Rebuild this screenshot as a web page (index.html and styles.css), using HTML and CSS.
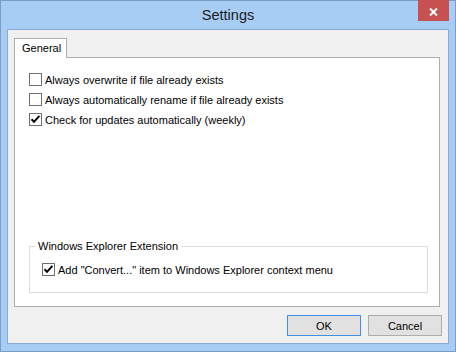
FILE: index.html
```html
<!DOCTYPE html>
<html>
<head>
<meta charset="utf-8">
<link rel="stylesheet" href="styles.css">
</head>
<body>
<div class="window">
  <div class="titlebar">
    <span class="title">Settings</span>
    <div class="close"><svg width="9" height="8" viewBox="0 0 9 8"><path d="M1 0.5 L8 7.5 M8 0.5 L1 7.5" stroke="#fff" stroke-width="2" fill="none"/></svg></div>
  </div>
  <div class="client">
    <div class="tabs"><div class="tab">General</div></div>
    <div class="panel">
      <div class="options">
        <label class="row"><span class="box"></span><span>Always overwrite if file already exists</span></label>
        <label class="row"><span class="box"></span><span>Always automatically rename if file already exists</span></label>
        <label class="row"><span class="box"><svg width="11" height="11" viewBox="0 0 11 11"><path d="M1.5 5.2 L4 7.8 L9.4 1.8" stroke="#000" stroke-width="2" fill="none"/></svg></span><span>Check for updates automatically (weekly)</span></label>
      </div>
      <fieldset class="group">
        <legend>Windows Explorer Extension</legend>
        <label class="row"><span class="box"><svg width="11" height="11" viewBox="0 0 11 11"><path d="M1.5 5.2 L4 7.8 L9.4 1.8" stroke="#000" stroke-width="2" fill="none"/></svg></span><span>Add "Convert..." item to Windows Explorer context menu</span></label>
      </fieldset>
    </div>
    <div class="buttons">
      <button class="btn default">OK</button>
      <button class="btn">Cancel</button>
    </div>
  </div>
</div>
</body>
</html>
```
FILE: styles.css
```css
html, body { margin: 0; padding: 0; }
body {
  width: 456px;
  height: 352px;
  font-family: "Liberation Sans", Arial, sans-serif;
  font-size: 11px;
  color: #000;
}
.window {
  box-sizing: border-box;
  width: 456px;
  height: 352px;
  border: 1px solid #7d9ccc;
  background: #a7cdf4;
  padding: 0 6px 7px;
  display: flex;
  flex-direction: column;
  position: relative;
}
.titlebar {
  height: 28px;
  flex: none;
  display: flex;
  align-items: center;
  justify-content: center;
}
.title {
  font-size: 14.5px;
  color: #1b1b1b;
}
.close {
  position: absolute;
  top: -1px;
  right: 6px;
  width: 31px;
  height: 21px;
  background: #c75050;
  display: flex;
  align-items: center;
  justify-content: center;
  padding-top: 2px;
  box-sizing: border-box;
}
.client {
  flex: 1;
  border: 1px solid #8aa8d4;
  background: #f0f0f0;
  padding: 8px 6px 7px 6px;
  display: flex;
  flex-direction: column;
  min-height: 0;
}
.tabs { display: flex; flex: none; }
.tab {
  box-sizing: border-box;
  width: 53px;
  height: 20px;
  border: 1px solid #adadad;
  border-bottom: 0;
  background: #fff;
  padding-left: 7px;
  line-height: 18px;
  margin-bottom: -1px;
  position: relative;
  z-index: 1;
}
.panel {
  flex: 1;
  box-sizing: border-box;
  border: 1px solid #adadad;
  background: #fff;
  margin-right: 2px;
  padding: 15px 11px 13px 14px;
  display: flex;
  flex-direction: column;
}
.options {
  display: flex;
  flex-direction: column;
  gap: 7px;
}
.row {
  display: flex;
  align-items: center;
  height: 13px;
  gap: 3px;
  white-space: nowrap;
}
.box {
  box-sizing: border-box;
  width: 13px;
  height: 13px;
  border: 1px solid #707070;
  background: #fff;
  flex: none;
  display: flex;
}
.group {
  margin: auto 0 0 0;
  border: 1px solid #dcdcdc;
  padding: 10px 12px 16px;
  min-width: 0;
}
.group legend {
  padding: 0 3px;
  margin-left: -7px;
  line-height: 13px;
}
.buttons {
  display: flex;
  justify-content: flex-end;
  gap: 7px;
  margin-top: 8px;
  flex: none;
}
.btn {
  box-sizing: border-box;
  width: 74px;
  height: 21px;
  border: 1px solid #adadad;
  background: #e1e1e1;
  font: inherit;
  color: #000;
  padding: 0;
}
.btn.default { border-color: #3c8ee6; }
```
